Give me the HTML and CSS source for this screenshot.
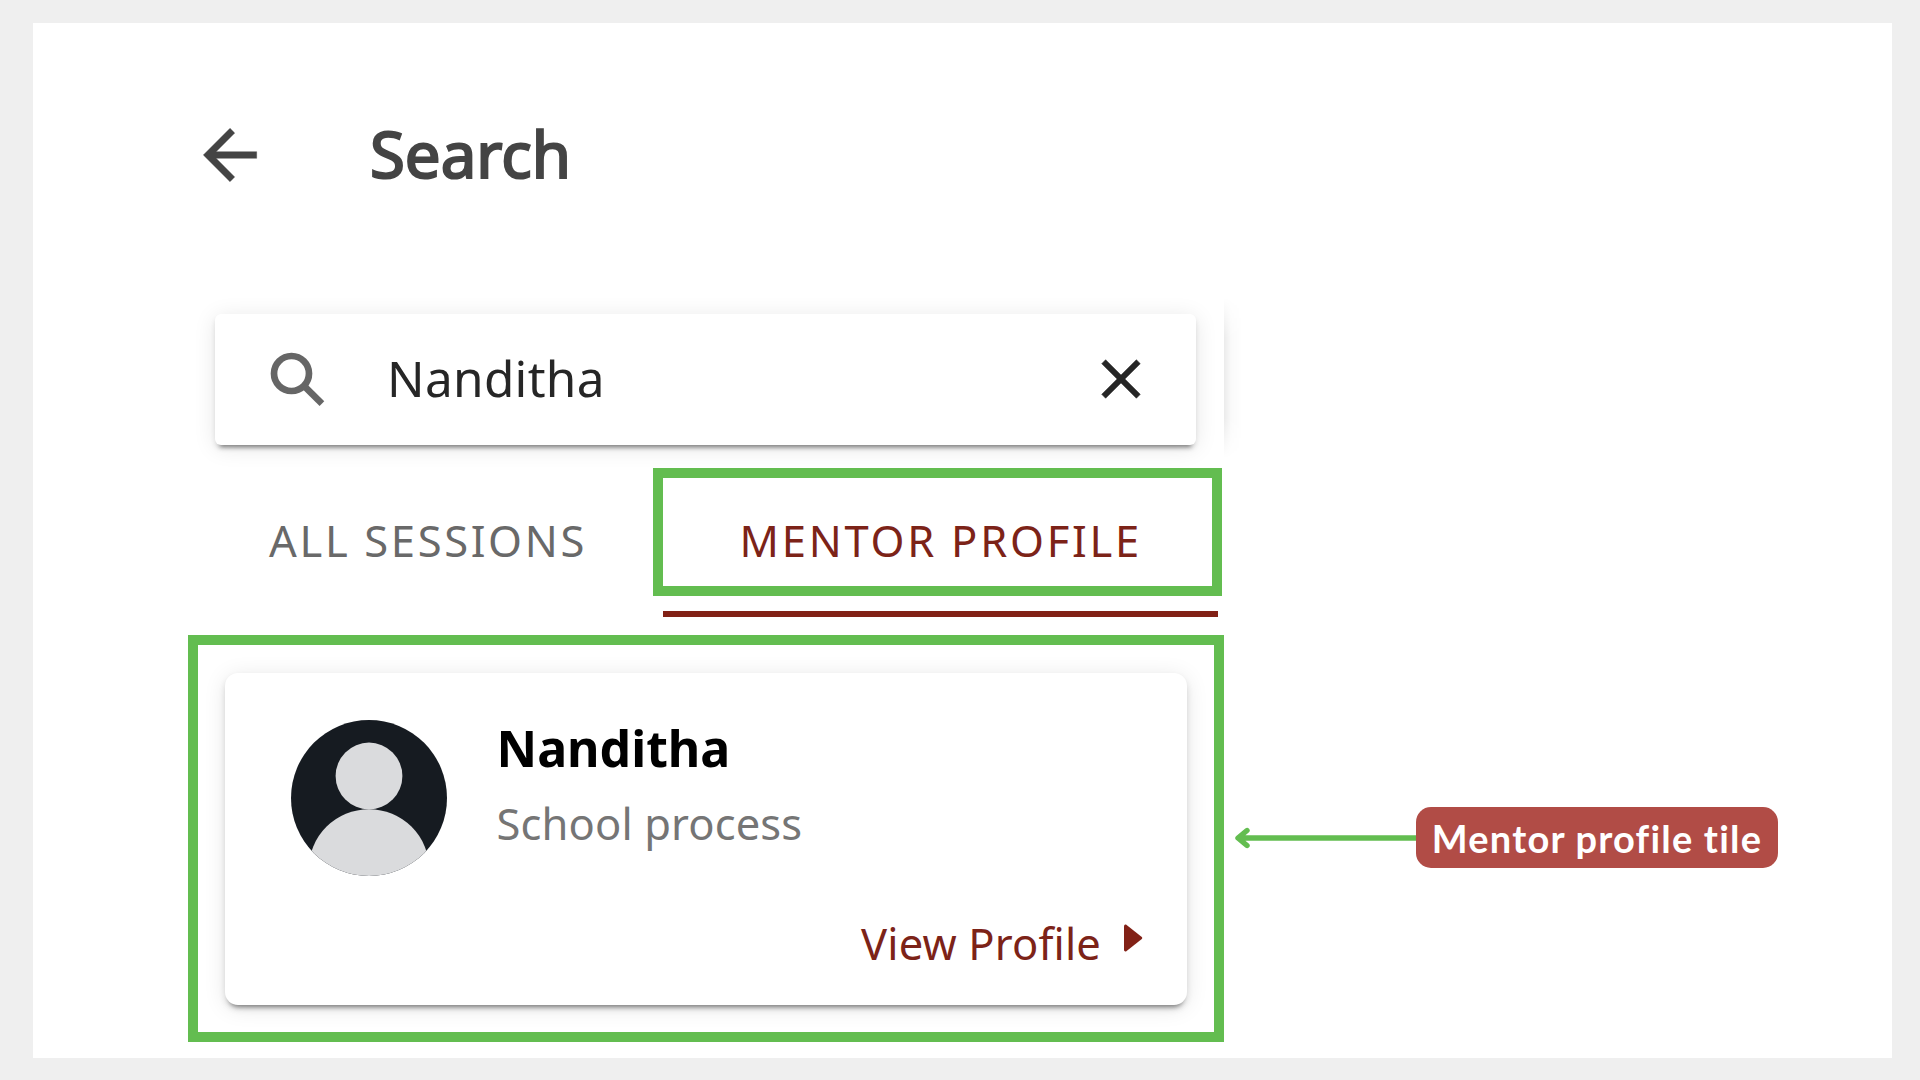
FILE: index.html
```html
<!DOCTYPE html>
<html lang="en">
<head>
<meta charset="utf-8">
<title>Search</title>
<link rel="stylesheet" href="styles.css">
</head>
<body>
<main class="panel">
  <header class="header">
    <svg class="back" viewBox="0 0 24 24"><path d="M20 11H7.83l5.59-5.59L12 4l-8 8 8 8 1.41-1.41L7.83 13H20v-2z"/></svg>
    <h1 class="title">Search</h1>
  </header>

  <div class="search-row">
    <div class="search">
      <svg class="search-icon" viewBox="0 0 24 24"><circle cx="9.7" cy="9.7" r="5.75"/><path d="M13.8 13.8l5.9 5.8"/></svg>
      <span class="query">Nanditha</span>
      <svg class="clear" viewBox="0 0 24 24"><path d="M19 6.41L17.59 5 12 10.59 6.41 5 5 6.41 10.59 12 5 17.59 6.41 19 12 13.41 17.59 19 19 17.59 13.41 12z"/></svg>
    </div>
    <div class="edge"></div>
  </div>

  <nav class="tabs">
    <span class="tab">ALL SESSIONS</span>
    <div class="tab-active">
      <span class="tab-box">MENTOR PROFILE</span>
      <div class="underline"></div>
    </div>
  </nav>

  <section class="result">
    <div class="outline">
      <article class="card">
        <div class="person">
          <svg class="avatar" viewBox="0 0 156 156">
            <clipPath id="round"><circle cx="78" cy="78" r="78"/></clipPath>
            <g clip-path="url(#round)">
              <rect width="156" height="156" fill="#161b21"/>
              <circle cx="78" cy="56" r="33.4" fill="#dadbdd"/>
              <circle cx="78" cy="149.5" r="60.3" fill="#dadbdd"/>
            </g>
          </svg>
          <div class="details">
            <div class="name">Nanditha</div>
            <div class="role">School process</div>
          </div>
        </div>
        <div class="view">
          <span>View Profile</span>
          <svg class="caret" viewBox="0 0 19 28"><path d="M0 2.2Q0 .2 2 .6L17.8 13Q18.8 14 17.8 15L2 27.4Q0 27.8 0 25.8z"/></svg>
        </div>
      </article>
    </div>
    <div class="callout">
      <svg class="arrow" viewBox="0 0 182 24"><path d="M182 12H6M13 4.5L4 12l9 7.5"/></svg>
      <span class="label">Mentor profile tile</span>
    </div>
  </section>
</main>
</body>
</html>
```
FILE: styles.css
```css
* { box-sizing: border-box; }

body {
  margin: 0;
  height: 1080px;
  overflow: hidden;
  padding: 23px 28px 22px 33px;
  background: #efefef;
  font-family: "Noto Sans", sans-serif;
}

svg { display: block; flex: none; }

.panel {
  height: 1035px;
  padding-top: 91px;
  background: #fff;
}

.header {
  display: flex;
  align-items: flex-start;
  height: 80px;
  margin-left: 157px;
}
.back {
  width: 80px;
  height: 80px;
  margin-top: 1px;
  fill: #444;
  stroke: #444;
  stroke-width: .12;
}
.title {
  margin: 0 0 0 100px;
  font-size: 63.5px;
  font-weight: 400;
  line-height: 80px;
  color: #444;
  -webkit-text-stroke: 2.2px #444;
}

.search-row {
  display: flex;
  align-items: flex-start;
  margin-top: 120px;
  padding-left: 182px;
}
.search {
  display: flex;
  align-items: center;
  width: 981px;
  height: 131px;
  padding: 0 42px 0 47px;
  border-radius: 6px;
  background: #fff;
  box-shadow: 0 7px 4px -5px rgba(0, 0, 0, .42), 0 4px 5px rgba(0, 0, 0, .1), 0 3px 22px rgba(0, 0, 0, .1);
}
.search-icon {
  width: 73px;
  height: 73px;
  margin-top: 2px;
  fill: none;
  stroke: #666;
  stroke-width: 2.2;
}
.query {
  flex: 1;
  margin-left: 52px;
  padding-bottom: 4px;
  font-size: 49.5px;
  line-height: 66px;
  letter-spacing: .3px;
  color: #262626;
}
.clear {
  width: 66px;
  height: 66px;
  margin-bottom: 1px;
  fill: #262626;
  stroke: #262626;
  stroke-width: .2;
}
.edge {
  width: 18px;
  height: 160px;
  margin: -16px 0 -29px 28px;
  background: linear-gradient(90deg, rgba(0, 0, 0, .08), rgba(0, 0, 0, .02) 40%, transparent);
  mask-image: linear-gradient(transparent, #000 25%, #000 75%, transparent);
}

.tabs {
  display: flex;
  height: 149px;
  margin-top: 23px;
  padding-left: 236px;
  font-size: 43.5px;
  line-height: 60px;
  letter-spacing: 2.75px;
  white-space: nowrap;
}
.tab { width: 384px; padding-top: 42px; color: #696969; letter-spacing: 2.65px; }
.tab-box {
  display: block;
  width: 569px;
  height: 128px;
  padding: 32px 0 0 76.5px;
  border: 10px solid #63bd50;
  color: #7c2318;
}
.underline {
  width: 554.5px;
  height: 6px;
  margin: 14.5px 0 0 10px;
  background: #822116;
}

.result {
  display: flex;
  align-items: flex-start;
  margin-top: 18px;
  padding-left: 155px;
}
.outline {
  width: 1036px;
  height: 407px;
  padding: 28px 27px 27px 26.5px;
  border: 10px solid #63bd50;
}
.card {
  height: 332px;
  padding: 47px 44px 0 66px;
  border-radius: 13px;
  background: #fff;
  box-shadow: 0 6px 4px -4px rgba(0, 0, 0, .4), 0 4px 6px rgba(0, 0, 0, .12), 0 3px 22px rgba(0, 0, 0, .1);
}
.person { display: flex; }
.avatar { width: 156px; height: 156px; }
.details { padding-left: 50px; }
.name {
  height: 75px;
  font-size: 50px;
  font-weight: 700;
  line-height: 57px;
  color: #000;
}
.role { font-size: 43.5px; line-height: 56px; letter-spacing: .12px; color: #757575; }
.view {
  display: flex;
  justify-content: flex-end;
  gap: 23px;
  margin-top: 37px;
  font-size: 43.5px;
  line-height: 60px;
  letter-spacing: .15px;
  color: #7c2318;
}
.caret { width: 19px; height: 28px; margin-top: 11px; fill: #822116; }

.callout {
  display: flex;
  align-items: center;
  height: 61px;
  margin: 172px 0 0 10px;
}
.arrow {
  width: 182px;
  height: 24px;
  fill: none;
  stroke: #63bd50;
  stroke-width: 5.4;
  stroke-linecap: round;
  stroke-linejoin: round;
}
.label {
  width: 362px;
  height: 61px;
  border-radius: 15px;
  background: #b14c46;
  color: #fff;
  font-family: Lato, sans-serif;
  font-size: 38px;
  font-weight: 700;
  line-height: 62px;
  letter-spacing: 1.2px;
  text-align: center;
  white-space: nowrap;
}
```
